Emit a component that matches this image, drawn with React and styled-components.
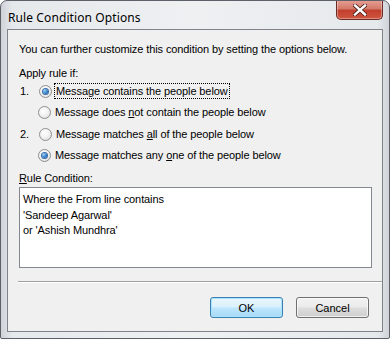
import React from "react";
import styled, { createGlobalStyle, css } from "styled-components";

const Global = createGlobalStyle`
  html, body { margin: 0; padding: 0; background: #ffffff; }
  body { font-family: "Liberation Sans", Arial, sans-serif; }
`;

const Frame = styled.div`
  width: 390px;
  height: 339px;
  box-sizing: border-box;
  border: 1px solid #5c6068;
  border-radius: 7px 7px 2px 2px;
  background: linear-gradient(90deg, #cfd3d8 0%, #e6e9ec 3%, #eef0f2 50%, #e6e9ec 97%, #cfd3d8 100%);
  display: flex;
  flex-direction: column;
  padding: 0 6px 6px 6px;
  overflow: hidden;
`;

const TitleBar = styled.div`
  height: 28px;
  display: flex;
  align-items: flex-start;
  justify-content: space-between;
`;

const Title = styled.div`
  font-family: "Noto Sans", "Open Sans", sans-serif;
  font-size: 12px;
  color: #000;
  margin-top: 8px;
  margin-left: 1px;
  letter-spacing: 0.1px;
`;

const Close = styled.div`
  width: 47px;
  height: 20px;
  box-sizing: border-box;
  margin-top: -1px;
  border: 1px solid #6b2a25;
  border-top: none;
  border-radius: 0 0 5px 5px;
  background: linear-gradient(180deg, #e6a195 0%, #d47a6b 45%, #c2402e 55%, #cf553f 100%);
  box-shadow: inset 0 0 0 1px rgba(255, 255, 255, 0.35);
  display: flex;
  align-items: center;
  justify-content: center;
`;

const Client = styled.div`
  flex: 1;
  background: #f0f0f0;
  border: 1px solid #7f8389;
  box-sizing: border-box;
  padding: 9px 10px 0 11px;
  display: flex;
  flex-direction: column;
  font-size: 11px;
  letter-spacing: -0.1px;
  color: #000;
`;

const Intro = styled.div`
  line-height: 14px;
  margin-top: 3px;
`;

const Label = styled.div`
  line-height: 14px;
  margin-top: ${(p) => p.$top || 0}px;
`;

const Group = styled.div`
  display: flex;
  flex-direction: column;
  gap: 7px;
  margin-top: ${(p) => p.$top || 0}px;
`;

const Row = styled.div`
  display: flex;
  align-items: center;
  height: 14px;
`;

const Num = styled.span`
  width: 19px;
  padding-left: 1px;
`;

const Radio = styled.span`
  width: 13px;
  height: 13px;
  box-sizing: border-box;
  border-radius: 50%;
  border: 1px solid #8e8f8f;
  background: radial-gradient(circle at 40% 35%, #ffffff 0%, #f4f4f4 40%, #d8d8d8 100%);
  margin: 0 3px 0 ${(p) => (p.$indent ? 19 : 0)}px;
  display: flex;
  align-items: center;
  justify-content: center;
  flex-shrink: 0;
  ${(p) =>
    p.$checked &&
    css`
      &::after {
        content: "";
        width: 5px;
        height: 5px;
        border-radius: 50%;
        background: radial-gradient(circle at 35% 35%, #9fd6ff 0%, #2b74c0 60%, #174a8b 100%);
        box-shadow: 0 0 0 1px #3a6ea5;
      }
    `}
`;

const Text = styled.span`
  line-height: 14px;
  padding: 0 1px;
  ${(p) =>
    p.$focus &&
    css`
      outline: 1px dotted #000;
    `}
`;

const Key = styled.span`
  text-decoration: underline;
`;

const Box = styled.div`
  margin-top: 2px;
  height: 81px;
  box-sizing: border-box;
  border: 1px solid #828790;
  background: #fff;
  padding: 4px 3px;
  line-height: 15.5px;
`;

const Separator = styled.div`
  margin-top: 13px;
  margin-left: -1px;
  margin-right: -10px;
  height: 1px;
  background: #a0a0a0;
  border-bottom: 1px solid #ffffff;
`;

const Buttons = styled.div`
  display: flex;
  justify-content: flex-end;
  gap: 13px;
  margin-top: 14px;
  margin-right: 3px;
`;

const Button = styled.button`
  width: 73px;
  height: 21px;
  box-sizing: border-box;
  font-family: "Liberation Sans", Arial, sans-serif;
  font-size: 11px;
  color: #000;
  border: 1px solid #707070;
  border-radius: 3px;
  background: linear-gradient(180deg, #f2f2f2 0%, #ebebeb 48%, #dddddd 52%, #cfcfcf 100%);
  box-shadow: inset 0 0 0 1px rgba(255, 255, 255, 0.7);
  padding: 0;
  ${(p) =>
    p.$default &&
    css`
      border-color: #3c7fb1;
      background: linear-gradient(180deg, #eaf6fd 0%, #d9f0fc 48%, #bee6fd 52%, #a7d9f5 100%);
      box-shadow: inset 0 0 0 1px #a8e4ff;
    `}
`;

export default function App() {
  return (
    <>
      <Global />
      <Frame>
        <TitleBar>
          <Title>Rule Condition Options</Title>
          <Close>
            <svg width="14" height="12" viewBox="0 0 14 12">
              <path
                d="M2 1.5 L12 10.5 M12 1.5 L2 10.5"
                stroke="#4a1c18"
                strokeWidth="4"
                strokeLinecap="square"
              />
              <path
                d="M2 1.5 L12 10.5 M12 1.5 L2 10.5"
                stroke="#ffffff"
                strokeWidth="2.4"
                strokeLinecap="square"
              />
            </svg>
          </Close>
        </TitleBar>
        <Client>
          <Intro>You can further customize this condition by setting the options below.</Intro>
          <Label $top={10}>Apply rule if:</Label>
          <Group $top={4}>
            <Row>
              <Num>1.</Num>
              <Radio $checked />
              <Text $focus>Message contains the people below</Text>
            </Row>
            <Row>
              <Radio $indent />
              <Text>
                Message does <Key>n</Key>ot contain the people below
              </Text>
            </Row>
          </Group>
          <Group $top={8}>
            <Row>
              <Num>2.</Num>
              <Radio />
              <Text>
                Message matches <Key>a</Key>ll of the people below
              </Text>
            </Row>
            <Row>
              <Radio $indent $checked />
              <Text>
                Message matches any <Key>o</Key>ne of the people below
              </Text>
            </Row>
          </Group>
          <Label $top={9}>
            <Key>R</Key>ule Condition:
          </Label>
          <Box>
            Where the From line contains
            <br />
            'Sandeep Agarwal'
            <br />
            or 'Ashish Mundhra'
          </Box>
          <Separator />
          <Buttons>
            <Button $default>OK</Button>
            <Button>Cancel</Button>
          </Buttons>
        </Client>
      </Frame>
    </>
  );
}
